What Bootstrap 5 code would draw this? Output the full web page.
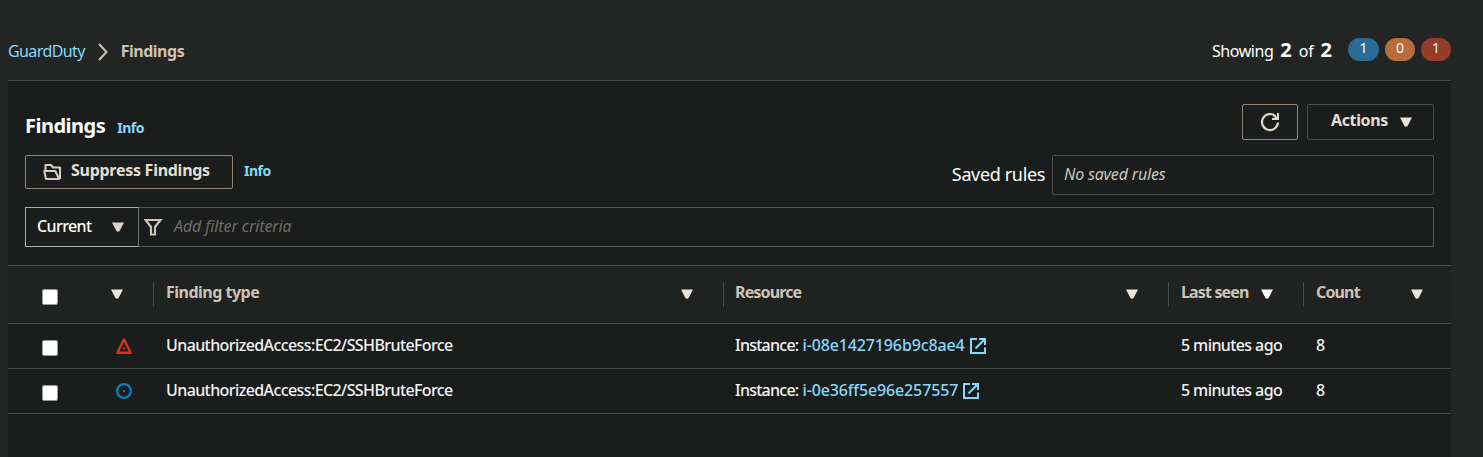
<!DOCTYPE html>
<html lang="en" data-bs-theme="dark">
<head>
<meta charset="utf-8">
<meta name="viewport" content="width=device-width, initial-scale=1">
<title>GuardDuty Findings</title>
<link href="https://cdn.jsdelivr.net/npm/bootstrap@5.3.0/dist/css/bootstrap.min.css" rel="stylesheet">
<style>
  body { background: #232525; color: #fff; font: 16px/20px "Noto Sans", "Open Sans", sans-serif; overflow: hidden; }
  svg { display: block; flex: none; }
  .t { white-space: nowrap; }
  .page { width: 1443px; margin-left: 8px; }
  .topbar { height: 81px; border-bottom: 1px solid #464949; }
  .aws-link { color: #84d9f8; text-decoration: none; }
  .sand { color: #cdc3b7; }
  .panel { background: #1b1d1c; height: 376px; }
  .pill { height: 23px; border-radius: 12px; font-size: 14px; line-height: 20px; text-align: center; }
  .box { border: 1px solid #4d4f4f; border-radius: 2px; background: transparent; padding: 0; }
  .box-strong { border-color: #8e8376; }
  .btn-text { font-weight: 700; color: #e4ddd4; }
  .findings { table-layout: fixed; width: 1443px; margin: 0; border-collapse: separate; border-spacing: 0; color: #f2f3f3; }
  .findings th, .findings td { padding: 0; vertical-align: top; border-bottom: 1px solid #464949; }
  .findings th { height: 59px; border-top: 1px solid #464949; background: #1f2221; }
  .findings td { height: 45px; font-weight: 500; }
  .head { height: 25px; margin-top: 16px; padding: 0 29px 0 12px; }
  .head.sep { border-left: 1px solid #464949; }
  .head .t { line-height: 21px; }
  .line { padding: 11px 0 0 13px; height: 44px; }
  .tick { appearance: none; width: 16px; height: 16px; margin: 0; border: 1px solid #909b9b; border-radius: 2px; background: #fff; display: block; }

  #g1 { letter-spacing: -.6px; }
  #g2 { margin-left: 12px; letter-spacing: -.5px; }
  #h1 { letter-spacing: -.5px; }
  #h2, #h3, #h4 { letter-spacing: -.85px; }
  #s1 { letter-spacing: -.45px; }
  #s3 { letter-spacing: -.2px; }
  #f1, #r1 { line-height: 26px; }
  #f1 { font-size: 20px; margin-top: 9px; letter-spacing: -.5px; }
  .info { font-size: 14px; letter-spacing: -.5px; }
  #f2 { margin: 14px 0 0 12px; }
  #f3 { margin: 6px 0 0 11px; }
  #r1 { font-size: 18px; margin: 6px 7px 0 0; letter-spacing: -.35px; }
  #r2 { letter-spacing: -.18px; }
  #s2, #s4 { font-size: 20px; margin: 0 7px; }
  #s4 { margin-right: 16px; }
  #a1 { margin-right: 12px; letter-spacing: -.38px; }
  #a2 { letter-spacing: -.27px; }
  #c1 { letter-spacing: -.6px; font-weight: 500; }
  #c2 { letter-spacing: -.1px; }
  .u1 { letter-spacing: -.6px; }
  .u2 { margin-right: 4px; letter-spacing: -.75px; }
  .u3, .u4 { letter-spacing: -.13px; }
  .u5 { letter-spacing: -.6px; }
</style>
</head>
<body>
<svg class="d-none">
  <symbol id="down" viewBox="0 0 12 10"><path d="M0 .5h12L7.600 8.900q-1.600 1.600-3.200 0z" fill="currentColor"/></symbol>
  <symbol id="ext" viewBox="0 0 16 16"><path d="M7 1H1v14h14V9.500M9 1h6v6M14.500 1.500 5.500 10.500" fill="none" stroke="currentColor" stroke-width="2"/></symbol>
</svg>
<div class="page">
  <header class="topbar d-flex justify-content-between">
    <nav class="d-flex" style="padding-top:41px">
      <a href="#" class="aws-link t" id="g1">GuardDuty</a>
      <svg class="sand" width="12" height="18" style="margin:2px 0 0 12px" viewBox="0 0 12 18"><path d="M2 1l7.500 8L2 17" fill="none" stroke="currentColor" stroke-width="2"/></svg>
      <span class="t sand fw-bold" id="g2">Findings</span>
    </nav>
    <div class="d-flex">
      <div class="d-flex align-items-baseline t" style="padding-top:40px;height:65px">
        <span id="s1">Showing</span><b id="s2">2</b><span id="s3">of</span><b id="s4">2</b>
      </div>
      <div class="d-flex" style="padding-top:38px;gap:6px">
        <span class="pill" style="background:#2a6b93;width:31px">1</span>
        <span class="pill" style="background:#b96c39;width:30px">0</span>
        <span class="pill" style="background:#963b2b;width:30px">1</span>
      </div>
    </div>
  </header>
  <main class="panel">
    <div class="d-flex" style="padding:23px 17px 0;height:74px">
      <h1 class="t fw-bold mb-0" id="f1">Findings</h1>
      <a href="#" class="aws-link t fw-bold info" id="f2">Info</a>
      <button class="box box-strong ms-auto d-flex align-items-center justify-content-center" style="width:56px;height:36px" aria-label="Refresh">
        <svg width="20" height="20" viewBox="0 0 20 20"><path d="M18 10.500a8 8 0 1 1-2.500-6.300" fill="none" stroke="#ddd5ca" stroke-width="2.200"/><path d="M17 1h2v7h-7V6h3l-1.500-1.500L15 3l2 2z" fill="#ddd5ca"/></svg>
      </button>
      <button class="box d-flex" style="width:127px;height:36px;margin-left:9px;padding:5px 0 0 23px">
        <span class="btn-text t" id="a1">Actions</span><svg width="12" height="10" style="margin-top:7px;color:#e9e0d7"><use href="#down"/></svg>
      </button>
    </div>
    <div class="d-flex" style="padding:0 17px;height:52px">
      <button class="box box-strong d-flex" style="width:208px;height:34px;padding:4px 0 0 17px">
        <svg width="20" height="18" style="margin-top:3px" viewBox="0 0 20 18"><path d="M2.500 8V2h5.500l2 2.500h7V16M1.300 8h11L16 16H3z" fill="none" stroke="#d5ccc1" stroke-width="2.100" stroke-linejoin="round"/></svg>
        <span class="btn-text t" id="a2" style="margin-left:8px">Suppress Findings</span>
      </button>
      <a href="#" class="aws-link t fw-bold info" id="f3">Info</a>
      <span class="t ms-auto" id="r1">Saved rules</span>
      <div class="box fst-italic t" style="width:382px;height:40px;padding:8px 0 0 11px;color:#cdc6bb"><span id="r2">No saved rules</span></div>
    </div>
    <div class="d-flex" style="padding:0 17px;height:58px">
      <div class="d-flex" style="width:114px;height:40px;border:1px solid #a5b1b1;border-right-color:#6f7676;padding:8px 0 0 11px">
        <span class="t" id="c1">Current</span><svg width="12" height="10" style="margin:6px 14px 0 auto;color:#ddd5ca"><use href="#down"/></svg>
      </div>
      <div class="d-flex flex-grow-1" style="height:40px;border:1px solid #565959;border-left:0;padding:8px 0 0 5px">
        <svg width="19" height="18" style="margin-top:2px" viewBox="0 0 19 18"><path d="M1.500 2h15L11 9v7.500H7V9z" fill="none" stroke="#cdc3b7" stroke-width="2.200"/></svg>
        <span class="t fst-italic" id="c2" style="margin-left:11px;color:#6f6c67">Add filter criteria</span>
      </div>
    </div>
    <table class="findings">
      <colgroup><col style="width:97px"><col style="width:48px"><col style="width:570px"><col style="width:445px"><col style="width:135px"><col style="width:148px"></colgroup>
      <thead>
        <tr>
          <th><input type="checkbox" class="tick" style="margin:23px 0 0 34px" aria-label="Select all"></th>
          <th><svg width="12" height="10" style="margin:23px 0 0 6px;color:#ebe2d9"><use href="#down"/></svg></th>
          <th><div class="head sep d-flex justify-content-between"><span class="t sand" id="h1">Finding type</span><svg width="12" height="10" style="margin-top:7px;margin-right:1px;color:#ebe2d9"><use href="#down"/></svg></div></th>
          <th><div class="head sep d-flex justify-content-between" style="padding-left:11px"><span class="t sand" id="h2">Resource</span><svg width="12" height="10" style="margin-top:7px;margin-right:1px;color:#ebe2d9"><use href="#down"/></svg></div></th>
          <th><div class="head sep d-flex justify-content-between"><span class="t sand" id="h3">Last seen</span><svg width="12" height="10" style="margin-top:7px;margin-right:1px;color:#fff"><use href="#down"/></svg></div></th>
          <th><div class="head sep d-flex justify-content-between" style="padding-right:28px"><span class="t sand" id="h4">Count</span><svg width="12" height="10" style="margin-top:7px;color:#ebe2d9"><use href="#down"/></svg></div></th>
        </tr>
      </thead>
      <tbody>
        <tr>
          <td><input type="checkbox" class="tick" style="margin:16px 0 0 34px" aria-label="Select finding"></td>
          <td><svg width="18" height="18" style="margin:13px 0 0 10px" viewBox="0 0 18 18"><path d="M9 2.500 15.700 15.700H2.300z" fill="none" stroke="#d13619" stroke-width="2.500" stroke-linejoin="round"/><path d="M8 10.500h2v2H8z" fill="#d13619"/></svg></td>
          <td><div class="line"><span class="t u1">UnauthorizedAccess:EC2/SSHBruteForce</span></div></td>
          <td><div class="line d-flex t" style="padding-left:12px"><span class="u2">Instance:</span><a href="#" class="aws-link u3">i-08e1427196b9c8ae4</a><svg class="aws-link" width="16" height="16" style="margin:3px 0 0 5px"><use href="#ext"/></svg></div></td>
          <td><div class="line"><span class="t u5">5 minutes ago</span></div></td>
          <td><div class="line">8</div></td>
        </tr>
        <tr>
          <td><input type="checkbox" class="tick" style="margin:16px 0 0 34px" aria-label="Select finding"></td>
          <td><svg width="18" height="18" style="margin:13px 0 0 10px" viewBox="0 0 18 18"><circle cx="9" cy="9" r="6.900" fill="none" stroke="#0a7cbd" stroke-width="2.300"/><path d="M8 8h2v2H8z" fill="#0a7cbd"/></svg></td>
          <td><div class="line"><span class="t u1">UnauthorizedAccess:EC2/SSHBruteForce</span></div></td>
          <td><div class="line d-flex t" style="padding-left:12px"><span class="u2">Instance:</span><a href="#" class="aws-link u4">i-0e36ff5e96e257557</a><svg class="aws-link" width="16" height="16" style="margin:3px 0 0 5px"><use href="#ext"/></svg></div></td>
          <td><div class="line"><span class="t u5">5 minutes ago</span></div></td>
          <td><div class="line">8</div></td>
        </tr>
      </tbody>
    </table>
  </main>
</div>
<script src="https://cdn.jsdelivr.net/npm/bootstrap@5.3.0/dist/js/bootstrap.bundle.min.js"></script>
</body>
</html>
